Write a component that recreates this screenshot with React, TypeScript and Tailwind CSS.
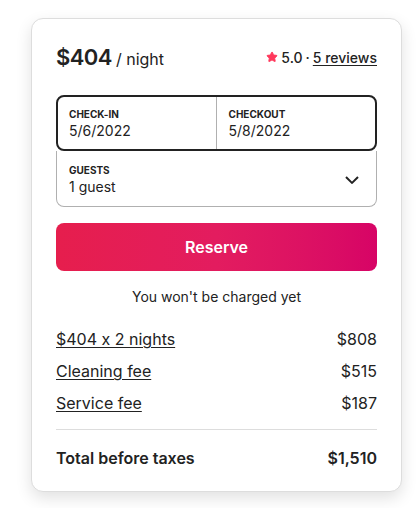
import { Star } from 'lucide-react'

const rows = [
  { label: '$404 x 2 nights', value: '$808' },
  { label: 'Cleaning fee', value: '$515' },
  { label: 'Service fee', value: '$187' },
]

export default function App() {
  return (
    <div
      className="min-h-[508px] w-[420px] bg-white pt-[18px] pl-[31px] text-[#222222] [font-feature-settings:'calt'_0]"
      style={{ fontFamily: 'Inter, "Noto Sans", sans-serif' }}
    >
      <div className="w-[371px] rounded-xl border border-[#dddddd] bg-white px-6 pt-6 pb-[21px] shadow-[0_6px_16px_rgba(0,0,0,0.12)]">
        <div className="flex h-[28px] items-center justify-between">
          <div className="flex items-baseline gap-1">
            <span className="text-[22px] font-semibold tracking-tight">$404</span>
            <span className="text-[16px]">/ night</span>
          </div>
          <div className="flex items-center gap-[3px] text-[14px] font-medium">
            <Star size={12} className="fill-[#FF385C] text-[#FF385C]" />
            <span>5.0</span>
            <span>·</span>
            <span className="underline underline-offset-2">5 reviews</span>
          </div>
        </div>

        <div className="mt-6">
          <div className="grid h-[56px] grid-cols-2 rounded-lg border-2 border-[#222222]">
            <div className="flex flex-col justify-center border-r border-[#b0b0b0] px-[11px]">
              <span className="text-[10px] font-bold uppercase leading-4">Check-in</span>
              <span className="text-[14px] leading-[18px]">5/6/2022</span>
            </div>
            <div className="flex flex-col justify-center px-3">
              <span className="text-[10px] font-bold uppercase leading-4">Checkout</span>
              <span className="text-[14px] leading-[18px]">5/8/2022</span>
            </div>
          </div>
          <div className="flex h-[56px] items-center justify-between rounded-b-lg border border-t-0 border-[#b0b0b0] pr-4 pl-3">
            <div className="flex flex-col">
              <span className="text-[10px] font-bold uppercase leading-4">Guests</span>
              <span className="text-[14px] leading-[18px]">1 guest</span>
            </div>
            <svg width="16" height="16" viewBox="0 0 32 32" fill="none" stroke="#222222" strokeWidth="4">
              <path d="M28 12 16.7 23.3a1 1 0 0 1-1.4 0L4 12" />
            </svg>
          </div>
        </div>

        <button className="mt-4 flex h-12 w-full items-center justify-center rounded-lg bg-gradient-to-r from-[#E61E4D] via-[#E31C5F] to-[#D70466] text-[16px] font-semibold text-white">
          Reserve
        </button>

        <p className="mt-4 text-center text-[14px] leading-5">You won't be charged yet</p>

        <div className="mt-5 flex flex-col gap-2">
          {rows.map((r) => (
            <div key={r.label} className="flex h-6 items-center justify-between text-[16px]">
              <span className="underline decoration-1 underline-offset-2">{r.label}</span>
              <span>{r.value}</span>
            </div>
          ))}
        </div>

        <div className="mt-[14px] border-t border-[#dddddd]" />

        <div className="mt-4 flex h-6 items-center justify-between text-[16px] font-semibold">
          <span>Total before taxes</span>
          <span>$1,510</span>
        </div>
      </div>
    </div>
  )
}
